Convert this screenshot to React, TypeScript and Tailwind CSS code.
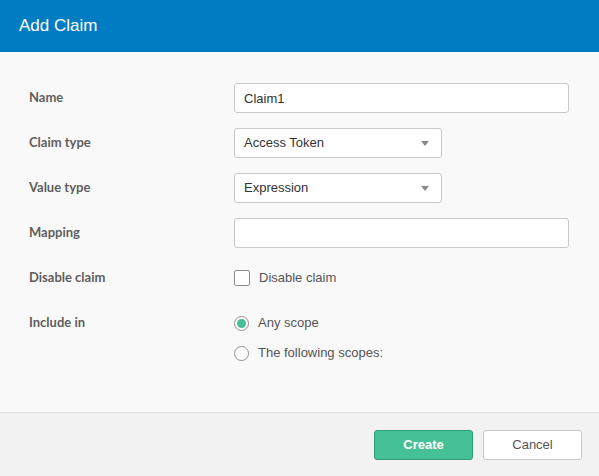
import React from 'react';

const labelCls = 'w-[205px] shrink-0 text-[13px] font-bold text-[#5e5e5e] font-["Lato",sans-serif]';

function Row({ label, children }: { label: string; children: React.ReactNode }) {
    return (
        <div className="flex items-start">
            <div className={`${labelCls} h-[30px] flex items-center`}>{label}</div>
            <div className="flex-1">{children}</div>
        </div>
    );
}

function Select({ value }: { value: string }) {
    return (
        <div className="w-[208px] h-[30px] flex items-center justify-between px-[9px] bg-white border border-[#c9c9c9] rounded-[3px] text-[13px] text-[#333]">
            <span>{value}</span>
            <svg width="8" height="5" viewBox="0 0 8 5" className="mr-[3px]">
                <path d="M0 0h8L4 5z" fill="#8a8a8a" />
            </svg>
        </div>
    );
}

function Radio({ checked, label }: { checked?: boolean; label: string }) {
    return (
        <div className="h-[30px] flex items-center gap-[9px]">
            <div className="w-[15px] h-[15px] rounded-full border border-[#8d8d8d] bg-white flex items-center justify-center">
                {checked && <div className="w-[9px] h-[9px] rounded-full bg-[#46c096]" />}
            </div>
            <span className="text-[13px] text-[#555]">{label}</span>
        </div>
    );
}

export default function App() {
    return (
        <div className="w-[599px] h-[476px] overflow-hidden bg-[#f9f9f9]" style={{ fontFamily: '"Liberation Sans", Arial, sans-serif' }}>
            <div className="h-[52px] bg-[#007cc2] flex items-center px-[19px]">
                <h2 className="text-[17px] text-white">Add Claim</h2>
            </div>

            <div className="pt-[31px] pb-[44px] pl-[29px] pr-[30px] flex flex-col gap-[15px]">
                <Row label="Name">
                    <input
                        defaultValue="Claim1"
                        className="w-full h-[30px] px-[9px] bg-white border border-[#c9c9c9] rounded-[3px] text-[13px] text-[#333] outline-none"
                    />
                </Row>
                <Row label="Claim type">
                    <Select value="Access Token" />
                </Row>
                <Row label="Value type">
                    <Select value="Expression" />
                </Row>
                <Row label="Mapping">
                    <input className="w-full h-[30px] px-[9px] bg-white border border-[#c9c9c9] rounded-[3px] text-[13px] outline-none" />
                </Row>
                <Row label="Disable claim">
                    <div className="h-[30px] flex items-center gap-[9px]">
                        <div className="w-[16px] h-[16px] bg-white border border-[#8d8d8d] rounded-[2px]" />
                        <span className="text-[13px] text-[#555]">Disable claim</span>
                    </div>
                </Row>
                <Row label="Include in">
                    <Radio checked label="Any scope" />
                    <Radio label="The following scopes:" />
                </Row>
            </div>

            <div className="border-t border-[#dcdcdc] bg-[#f2f2f2] h-[64px] flex items-start justify-end gap-[10px] pt-[17px] pr-[17px]">
                <button className="w-[99px] h-[30px] rounded-[3px] bg-[#46c096] border border-[#2f9e77] text-white text-[13px] font-semibold">
                    Create
                </button>
                <button className="w-[99px] h-[30px] rounded-[3px] bg-white border border-[#c8c8c8] text-[#555] text-[13px]">
                    Cancel
                </button>
            </div>
        </div>
    );
}
